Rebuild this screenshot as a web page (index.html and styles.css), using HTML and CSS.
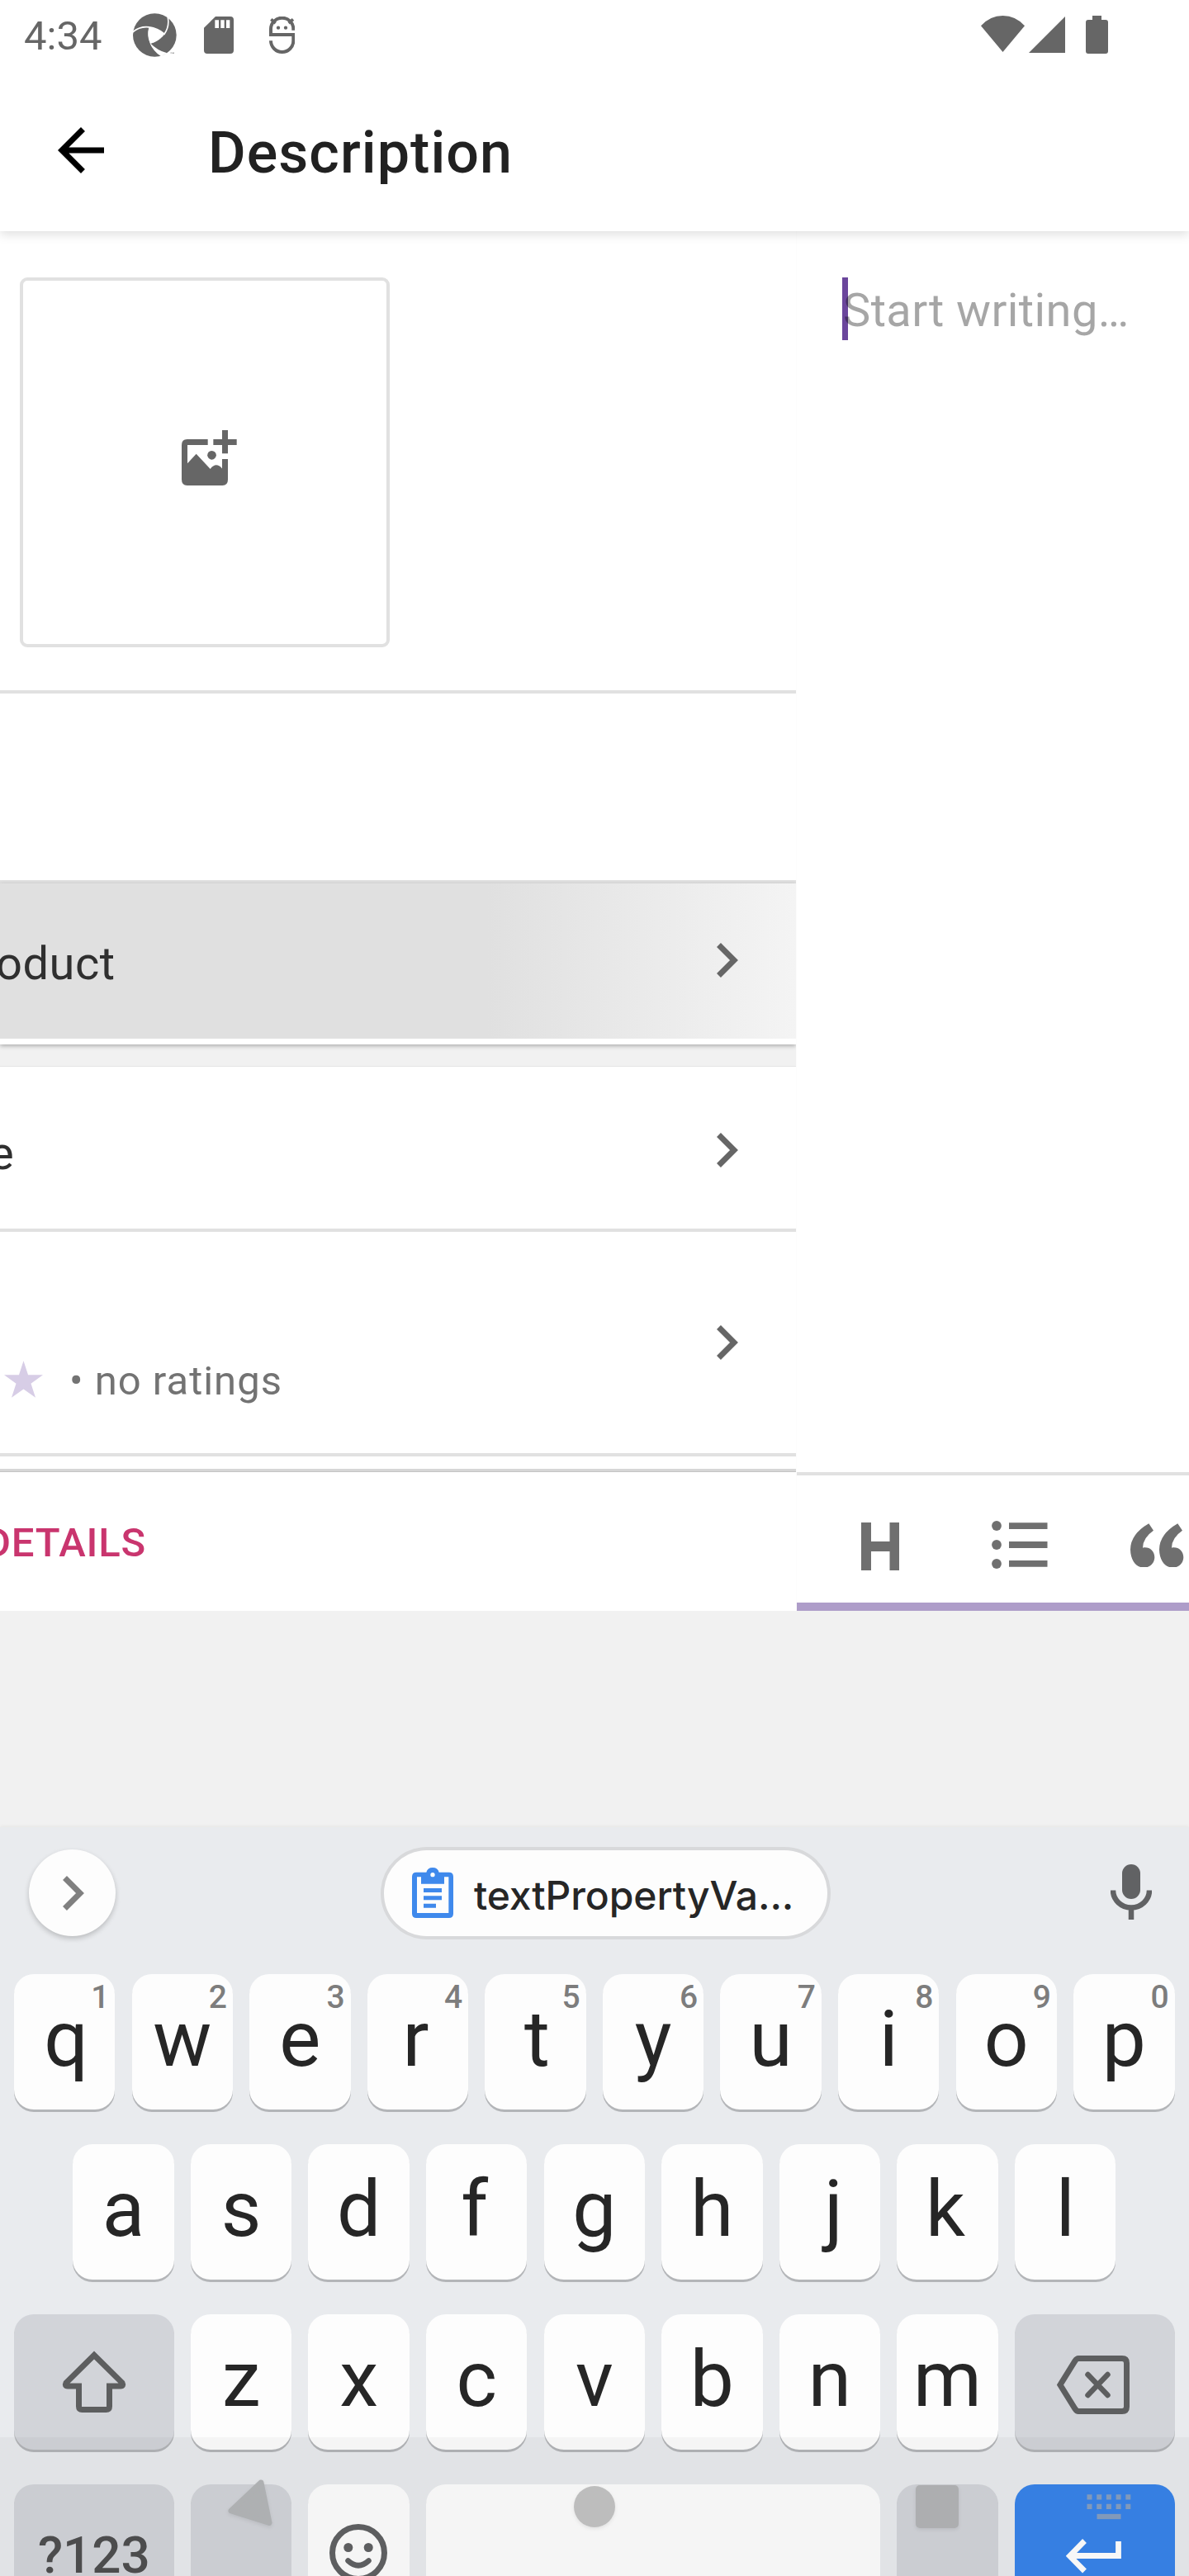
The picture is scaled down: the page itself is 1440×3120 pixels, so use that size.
FILE: index.html
```html
<!DOCTYPE html>
<html lang="en">
<head>
<meta charset="utf-8">
<title>Description</title>
<link rel="stylesheet" href="styles.css">
</head>
<body>
<div class="screen">
  <header class="top">
    <div class="status">
      <span class="clock">4:34</span>
      <svg class="s-swirl" viewBox="33 32 160 160">
        <circle cx="112.500" cy="112" r="79.500" fill="#666"/>
        <path d="M93 83Q122 86 148 108Q128 134 97 142Q84 112 93 83Z" fill="#fff"/>
        <path d="M30 103Q58 78 93 83Q122 86 148 108Q168 80 160 44" fill="none" stroke="#fff" stroke-width="5"/>
        <path d="M93 83Q84 112 97 142Q128 134 148 108" fill="none" stroke="#fff" stroke-width="3"/>
        <path d="M95 142Q108 172 136 190L158 178Q122 168 97 142Z" fill="#fff"/>
        <path d="M170 177h5M178 180v-4l2 2 2-2v4" stroke="#777" stroke-width="2" fill="none"/>
      </svg>
      <svg class="s-sd" viewBox="289 45 108 135"><path fill="#666" fill-rule="evenodd" d="M331 45H385Q397 45 397 57V168Q397 180 385 180H301Q289 180 289 168V86ZM329 58V87H343V58ZM350 58V87H363V58ZM370 58V87H383V58Z"/></svg>
      <svg class="s-bot" viewBox="527 45 94 135"><path d="M615 95V90A41 40 0 0 0 533 90V111H615V133A41 41 0 0 1 533 133" fill="none" stroke="#666" stroke-width="12"/><path d="M534 55L550 69M614 55L598 69" stroke="#666" stroke-width="11"/><circle cx="560" cy="86" r="6.500" fill="#666"/><circle cx="587" cy="86" r="6.500" fill="#666"/></svg>
      <svg class="s-wifi" viewBox="0 0 53 44"><path fill="#666" d="M26.500 44L0 12.300Q11 0 26.500 0T53 12.300Z"/></svg>
      <svg class="s-signal" viewBox="0 0 44 44"><path fill="#666" d="M44 0V44H0Z"/></svg>
      <svg class="s-battery" viewBox="0 0 27 46"><path fill="#666" d="M8 0H19V5H24Q27 5 27 8V43Q27 46 24 46H3Q0 46 0 43V8Q0 5 3 5H8Z"/></svg>
    </div>
    <div class="appbar">
      <svg class="back" viewBox="0 0 24 24"><path d="M20 11H7.830l5.590-5.590L12 4l-8 8 8 8 1.410-1.410L7.830 13H20v-2z"/></svg>
      <h1 class="title">Description</h1>
    </div>
  </header>

  <main class="panes">
    <section class="product">
      <div class="gallery">
        <div class="add-image">
          <svg class="add-icon" viewBox="0 0 200 187" preserveAspectRatio="none">
            <path fill="#666" fill-rule="evenodd" d="M20 31H95V50H21V112L53 80L104 131Q125 106 147 130V98H168V167Q168 187 148 187H20Q0 187 0 167V51Q0 31 20 31Z"/>
            <path fill="#666" d="M147 0H168V31H200V50H168V79H147V50H115V31H147Z"/><ellipse cx="109.500" cy="84.500" rx="16" ry="15" fill="#666"/>
          </svg>
        </div>
      </div>
      <div class="name-row"></div>
      <div class="row row-pressed">
        <span class="label label-describe">oduct</span>
        <svg class="chev" viewBox="0 0 26 42"><path d="M2.500 2.500L21 21L2.500 39.500" fill="none" stroke="#666" stroke-width="7"/></svg>
      </div>
      <div class="gap"></div>
      <div class="row row-price">
        <span class="label label-price">e</span>
        <svg class="chev" viewBox="0 0 26 42"><path d="M2.500 2.500L21 21L2.500 39.500" fill="none" stroke="#666" stroke-width="7"/></svg>
      </div>
      <div class="row row-reviews">
        <svg class="star" viewBox="0 0 20 19"><path fill="#d7cde6" d="M10 0l2.360 7.270H20l-6.180 4.420L16.180 19 10 14.560 3.820 19l2.360-7.310L0 7.270h7.640z"/></svg>
        <span class="ratings">• no ratings</span>
        <svg class="chev" viewBox="0 0 26 42"><path d="M2.500 2.500L21 21L2.500 39.500" fill="none" stroke="#666" stroke-width="7"/></svg>
      </div>
      <div class="details"><span class="details-label">DETAILS</span></div>
    </section>

    <section class="editor">
      <div class="writing"><span class="caret"></span><span class="hint">Start writing…</span></div>
      <div class="toolbar">
        <svg class="t-h" viewBox="0 0 46 58"><path fill="#6f6f6f" d="M0 0H12V23H34.500V0H46V58H34.500V35H12V58H0Z"/></svg>
        <svg class="t-list" viewBox="0 0 68 58"><g fill="#6f6f6f"><circle cx="6" cy="6" r="5.900"/><circle cx="6" cy="29" r="5.900"/><circle cx="6" cy="52" r="5.900"/><path d="M21 2.200H67.500V10H21ZM21 25H67.500V33H21ZM21 48H67.500V55.700H21Z"/></g></svg>
        <svg class="t-quote" viewBox="1289 313 193 161"><g fill="#6f6f6f"><path d="M1356 314Q1290 352 1289 408C1290 450 1312 474 1338 474C1360 474 1377 458 1377 436C1377 412 1356 397 1334 402Q1334 366 1373 339Z"/><path d="M1461 314Q1395 352 1394 408C1395 450 1417 474 1443 474C1465 474 1482 458 1482 436C1482 412 1461 397 1439 402Q1439 366 1478 339Z"/></g></svg>
      </div>
    </section>
  </main>

  <section class="keyboard">
    <div class="suggest">
      <div class="expand"><svg class="expand-icon" viewBox="0 0 26 42"><path d="M2.500 2.500L21 21L2.500 39.500" fill="none" stroke="#808080" stroke-width="7"/></svg></div>
      <div class="clip">
        <svg class="clip-icon" viewBox="147 112 150 183"><path fill="#3f89ec" fill-rule="evenodd" d="M199 129Q203 112 222 112T245 129H281Q297 129 297 145V279Q297 295 281 295H163Q147 295 147 279V145Q147 129 163 129ZM165 146V277H280V146H264V171H180V146ZM189 187H255V202H189ZM189 215H255V230H189ZM189 243H234V258H189ZM222 130A8 8 0 1 0 222 146A8 8 0 1 0 222 130Z"/></svg>
        <span class="clip-text">textPropertyVa...</span>
      </div>
      <svg class="mic" viewBox="0 0 50 67"><rect x="14" y="0" width="22" height="42" rx="11" fill="#616264"/><path d="M3 31.500A22 21 0 0 0 47 31.500M25 53V67" fill="none" stroke="#616264" stroke-width="6.500"/></svg>
    </div>
    <div class="keys">
      <div class="krow">
        <div class="key nudge-r"><i class="num">1</i>q</div><div class="key"><i class="num">2</i>w</div><div class="key"><i class="num">3</i>e</div><div class="key nudge-l"><i class="num">4</i>r</div><div class="key nudge-r"><i class="num">5</i>t</div><div class="key"><i class="num">6</i>y</div><div class="key"><i class="num">7</i>u</div><div class="key"><i class="num">8</i>i</div><div class="key"><i class="num">9</i>o</div><div class="key"><i class="num">0</i>p</div>
      </div>
      <div class="krow krow-mid">
        <div class="key">a</div><div class="key">s</div><div class="key">d</div><div class="key nudge-l">f</div><div class="key">g</div><div class="key">h</div><div class="key nudge-rr">j</div><div class="key nudge-l">k</div><div class="key">l</div>
      </div>
      <div class="krow">
        <div class="key key-wide key-dark"><svg class="shift" viewBox="0 0 78 75"><path d="M39 5.500L5 39Q3 43 7 43H20.500V67.500Q20.500 71.500 24.500 71.500H53.500Q57.500 71.500 57.500 67.500V43H71Q75 43 73 39Z" fill="none" stroke="#5d5e5f" stroke-width="7"/></svg></div>
        <div class="key">z</div><div class="key">x</div><div class="key">c</div><div class="key">v</div><div class="key">b</div><div class="key">n</div><div class="key">m</div>
        <div class="key key-wide key-dark"><svg class="erase" viewBox="0 0 88 71"><path d="M26 3.500H79Q84.500 3.500 84.500 9V62Q84.500 67.500 79 67.500H26Q24 67.500 22 64.500L4 35.500L22 6.500Q24 3.500 26 3.500Z" fill="none" stroke="#5d5e5f" stroke-width="7"/><path d="M37.500 23L61.500 48M61.500 23L37.500 48" stroke="#5d5e5f" stroke-width="6.500" stroke-linecap="round"/></svg></div>
      </div>
      <div class="krow">
        <div class="key key-wide key-dark key-sym">?123</div>
        <div class="key key-dark"></div>
        <div class="key"><svg class="emoji" viewBox="0 0 70 70"><circle cx="35" cy="35" r="31.500" fill="none" stroke="#616264" stroke-width="7"/><circle cx="22.800" cy="28.500" r="5.500" fill="#616264"/><circle cx="47.200" cy="28.500" r="5.500" fill="#616264"/><path d="M22.500 44.500Q35 56 47.500 44.500" fill="none" stroke="#616264" stroke-width="6.500" stroke-linecap="round"/></svg></div>
        <div class="key key-space"></div>
        <div class="key key-dark"></div>
        <div class="key key-wide key-enter"><svg class="enter" viewBox="0 0 67 42"><path d="M63.500 3V20.500H7M22.500 2.500L4.500 20.800L22.500 39" fill="none" stroke="#fff" stroke-width="6.800"/></svg></div>
      </div>
    </div>
  </section>

  <div class="navbar">
    <svg class="nav-icons" viewBox="0 2952 1440 168">
      <g class="nav-shape">
        <path d="M316 3007L280 3041L326 3055.500Z" fill="#aeb0b2" stroke="#aeb0b2" stroke-width="7" stroke-linejoin="round"/>
        <circle cx="720" cy="3036" r="25" fill="#bdbdbd"/>
        <rect x="1109" y="3010" width="52" height="52" rx="5" fill="#adaeb0"/>
      </g>
      <path d="M1316.500 3024.300h53.500M1316.500 3035.800h53.500" stroke="#8199ba" stroke-width="6.300" stroke-dasharray="6 5.700" fill="none"/>
      <path d="M1328.500 3048H1357.500" stroke="#8199ba" stroke-width="6.300"/>
    </svg>
  </div>
</div>
</body>
</html>
```
FILE: styles.css
```css
* { box-sizing: border-box; }
body { margin: 0; background: #f1f1f1; font-family: Roboto, "Liberation Sans", sans-serif; }
svg { display: block; flex: none; }
.screen { position: relative; width: 1440px; height: 3120px; overflow: hidden; background: #f1f1f1; display: flex; flex-direction: column; }

/* status bar and app bar */
.top { position: relative; z-index: 1; flex: none; height: 280px; background: #fff; box-shadow: 0 4px 12px rgba(0,0,0,.13); }
.status { display: flex; align-items: flex-start; height: 88px; color: #666; }
.clock { width: 132px; margin: 15px 0 0 29px; font-size: 49px; line-height: 58px; }
.s-swirl { width: 53px; height: 53px; margin-top: 16px; }
.s-sd { width: 36px; height: 45px; margin: 20px 0 0 32.500px; }
.s-bot { width: 31.300px; height: 45px; margin: 20px 0 0 43.300px; }
.s-wifi { width: 53px; height: 44px; margin: 19px 0 0 auto; }
.s-signal { width: 44px; height: 44px; margin: 19.500px 0 0 5px; }
.s-battery { width: 27px; height: 46px; margin: 19px 98px 0 25px; }
.appbar { display: flex; align-items: flex-start; }
.back { width: 84px; height: 84px; margin: 52px 0 0 56px; }
.title { margin: 56px 0 0 112px; font-size: 70px; line-height: 82px; font-weight: 500; color: #212121; letter-spacing: 1.050px; }

/* the two sliding pages */
.panes { flex: none; display: grid; grid-template-columns: 964px 476px; height: 1671px; }
.product { background: #fff; overflow: hidden; }
.gallery { height: 560px; padding: 56px 0 0 24px; border-bottom: 4px solid #e1e1e1; }
.add-image { width: 448px; height: 448px; border: 4px solid #e1e1e1; border-radius: 9px; display: flex; }
.add-icon { width: 66.700px; height: 67px; margin: 181px 0 0 192px; }
.name-row { height: 230px; border-bottom: 4px solid #e0e0e0; }
.row { display: flex; align-items: flex-start; position: relative; background: #fff; }
.chev { width: 26px; height: 42px; margin-left: auto; margin-right: 70px; }
.label { font-size: 56px; line-height: 66px; color: #2f2f2f; letter-spacing: .5px; }
.row-pressed { z-index: 1; height: 195px; border-bottom: 7px solid #fff; background: linear-gradient(90deg, #e0e0e0 590px, #f4f4f4 100%); box-shadow: 0 2px 5px rgba(0,0,0,.28); }
.row-pressed .chev { margin-top: 72px; }
.label-describe { margin: 64px 0 0 -5px; }
.gap { height: 27px; background: #f1f1f1; border-bottom: 1px solid #e4e4e4; }
.row-price { height: 200px; border-bottom: 4px solid #e1e1e1; }
.row-price .chev { margin-top: 80px; }
.label-price { margin: 72px 0 0 -13px; }
.row-reviews { height: 272px; border-bottom: 4px solid #e1e1e1; }
.star { width: 47px; height: 45px; margin: 156px 0 0 5px; }
.ratings { margin: 152px 0 0 32px; font-size: 49px; line-height: 58px; color: #737373; letter-spacing: 1px; }
.row-reviews .chev { margin-top: 113px; }
.details { height: 187px; padding-top: 15px; background: linear-gradient(#fff 15px, #d6d6d6 15px, #d6d6d6 18px, #c4c4c4 18px, #c4c4c4 19px, #fff 19px); }
.details-label { display: block; margin: 61px 0 0 -19px; font-size: 49px; line-height: 58px; font-weight: 500; color: #c9356e; letter-spacing: .8px; }

.editor { background: #fff; border-left: 1px solid #fcfcfc; display: flex; flex-direction: column; }
.writing { height: 1503px; display: flex; align-items: flex-start; padding: 56px 0 0 55px; }
.caret { width: 7px; height: 76px; background: #6b469c; }
.hint { margin: 7px 0 0 -6px; font-size: 56px; line-height: 66px; color: rgba(0,0,0,.35); letter-spacing: .4px; white-space: nowrap; }
.toolbar { height: 168px; border-top: 4px solid #e1e1e1; border-bottom: 10px solid #ae9dc9; display: flex; align-items: flex-start; }
.t-h { width: 46px; height: 58px; margin: 57px 0 0 77.700px; }
.t-list { width: 68px; height: 58px; margin: 55px 0 0 112.700px; }
.t-quote { width: 64.300px; height: 53.700px; margin: 57.500px 0 0 100px; }

/* keyboard */
.keyboard { flex: none; margin-top: 262px; height: 907px; background: #e9ebee; box-shadow: 0 -1px 4px rgba(120,110,80,.08); }
.suggest { height: 178px; display: flex; align-items: flex-start; }
.expand { width: 105px; height: 105px; margin: 27px 0 0 35px; border-radius: 50%; background: #fdfdfd; box-shadow: 0 3px 6px rgba(0,0,0,.2); }
.expand-icon { width: 26px; height: 42px; margin: 32px 0 0 41px; }
.clip { width: 545px; height: 112px; margin: 24px 0 0 321px; border: 4px solid #d8d9db; border-radius: 56px; background: #fdfdfd; display: flex; align-items: flex-start; }
.clip-icon { width: 50px; height: 61px; margin: 21px 0 0 34px; }
.clip-text { margin: 26px 0 0 25px; font-family: Inter, Roboto, sans-serif; font-size: 48px; line-height: 58px; font-weight: 500; color: #262626; letter-spacing: -.1px; white-space: nowrap; }
.mic { width: 50px; height: 67px; margin: 45px 0 0 339px; }
.keys { display: flex; flex-direction: column; gap: 42px; padding: 0 17px; }
.krow { display: flex; gap: 20.200px; height: 164px; flex: none; }
.krow-mid { padding: 0 71.300px; }
.key { flex: 0 0 122.400px; position: relative; border-radius: 24px; background: #fdfdfd; box-shadow: 0 3px 0 #b3b5b8; text-align: center; font-size: 94.500px; line-height: 157px; color: #262626; }
.num { position: absolute; top: 7px; right: 7px; font-style: normal; font-weight: 500; font-size: 39px; line-height: 43px; color: #7d7d7d; }
/* optical centring for lopsided glyphs */
.nudge-r { padding-left: 4px; }
.nudge-rr { padding-left: 9px; }
.nudge-l { padding-right: 5px; }
.key-wide { flex-basis: 193.700px; }
.key-dark { background: #d2d4d9; }
.key-space { flex-basis: 550.200px; }
.key-sym { font-size: 62px; line-height: 171px; font-weight: 500; color: #4f4f50; }
.key-enter { background: #3884ea; }
.shift { width: 78px; height: 75px; margin: 44px 0 0 57.500px; }
.erase { width: 88px; height: 71px; margin: 50px 0 0 51.500px; }
.emoji { width: 70px; height: 70px; margin: 48px 0 0 25.500px; }
.enter { width: 67px; height: 42px; margin: 66px 0 0 62px; }

/* translucent system navigation bar over the keyboard */
.navbar { position: absolute; left: 0; bottom: 0; width: 1440px; height: 168px; background: rgba(0,0,0,.03); }
.nav-icons { width: 1440px; height: 168px; }
.nav-shape { filter: drop-shadow(0 2px 2px rgba(0,0,0,.08)); }
```
